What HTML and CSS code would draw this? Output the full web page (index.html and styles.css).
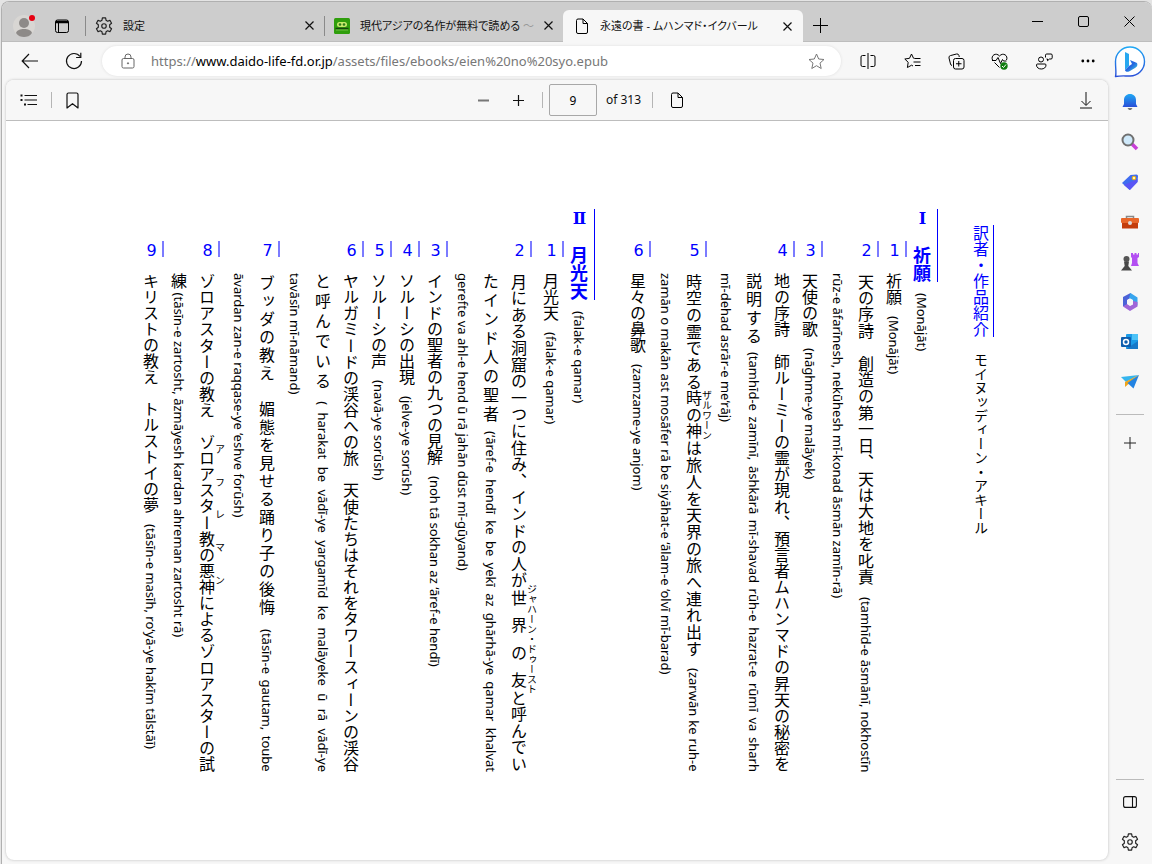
FILE: index.html
```html
<!DOCTYPE html>
<html lang="ja">
<head>
<meta charset="utf-8">
<title>永遠の書 - ムハンマド・イクバール</title>
<link rel="stylesheet" href="styles.css">
</head>
<body>
<div class="window">
  <header class="tabbar">
    <div class="tabbar-start">
      <button class="icon-btn profile" aria-label="プロファイル">
        <svg width="24" height="24" viewBox="0 0 24 24"><circle cx="12" cy="12" r="11" fill="#d8d6d3"/><circle cx="12" cy="9" r="5" fill="#8d8a88"/><path d="M4 19c1-3 4-4 8-4s7 1 8 4c-2 3-5 4-8 4s-6-1-8-4z" fill="#8d8a88"/></svg>
        <span class="dot"></span>
      </button>
      <button class="icon-btn" aria-label="タブ操作">
        <svg width="16" height="16" viewBox="0 0 16 16" fill="none" stroke="#000"><rect x="1.500" y="2" width="13" height="12.500" rx="2"/><path d="M2 3.500h12M2 4.500h12" stroke-width="1.500"/><path d="M4.500 5v9.500"/></svg>
      </button>
    </div>
    <div class="tab">
      <svg class="ico" width="18" height="18" viewBox="0 0 20 20"><use href="#gear"/></svg>
      <span class="tab-title">設定</span>
      <button class="close" aria-label="閉じる"><svg width="9" height="9" viewBox="0 0 9 9"><use href="#x"/></svg></button>
    </div>
    <div class="tab">
      <svg class="ico" width="16" height="16" viewBox="0 0 16 16"><rect width="16" height="16" rx="1.500" fill="#2f9e0c"/><rect x="3" y="4" width="10" height="5" rx="2.500" fill="#c5ea6a"/><circle cx="6" cy="6.500" r="1.300" fill="#2f7a1c"/><circle cx="10" cy="6.500" r="1.300" fill="#2f7a1c"/><path d="M1.500 10.500h13" stroke="#17450c" stroke-width="1.500"/><path d="M2 12h12" stroke="#8cd060" stroke-width=".7"/></svg>
      <span class="tab-title">現代アジアの名作が無料で読める <span class="fade">～</span></span>
      <button class="close" aria-label="閉じる"><svg width="9" height="9" viewBox="0 0 9 9"><use href="#x"/></svg></button>
    </div>
    <div class="tab active">
      <svg class="ico" width="16" height="16" viewBox="0 0 16 16"><use href="#doc"/></svg>
      <span class="tab-title">永遠の書 - ムハンマド・イクバール</span>
      <button class="close" aria-label="閉じる"><svg width="9" height="9" viewBox="0 0 9 9"><use href="#x"/></svg></button>
    </div>
    <button class="icon-btn new-tab" aria-label="新しいタブ"><svg width="15" height="15" viewBox="0 0 15 15"><path d="M7.500 0v15M0 7.500h15" stroke="#000"/></svg></button>
    <div class="win-controls">
      <button aria-label="最小化"><svg width="11" height="11" viewBox="0 0 11 11"><path d="M0 5.500h11" stroke="#000"/></svg></button>
      <button aria-label="最大化"><svg width="11" height="11" viewBox="0 0 11 11"><rect x=".5" y=".5" width="10" height="10" rx="1.500" fill="none" stroke="#000"/></svg></button>
      <button aria-label="ウィンドウを閉じる"><svg width="11" height="11" viewBox="0 0 11 11"><path d="M.5.5l10 10M10.500.5l-10 10" stroke="#000"/></svg></button>
    </div>
  </header>

  <div class="body">
    <div class="main">
      <nav class="toolbar">
        <button class="icon-btn back" aria-label="戻る"><svg width="18" height="16" viewBox="0 0 18 16" fill="none" stroke="#111" stroke-width="1.200"><path d="M17 8H1.500M8 1L1.200 8 8 15"/></svg></button>
        <button class="icon-btn reload" aria-label="更新"><svg width="18" height="18" viewBox="0 0 18 18" fill="none" stroke="#111" stroke-width="1.200"><path d="M16.500 9A7.500 7.500 0 1 1 15 4.500M15.800.8v4.700h-4.700"/></svg></button>
        <div class="address">
          <svg class="lock" width="14" height="16" viewBox="0 0 14 16" fill="none" stroke="#666"><rect x="1" y="5.500" width="12" height="9.500" rx="1.500"/><path d="M4 5.500V4a3 3 0 0 1 6 0v1.500"/><circle cx="7" cy="10.300" r=".6" fill="#666"/></svg>
          <a class="url" href="#">https://<b>www.daido-life-fd.or.jp</b>/assets/files/ebooks/eien%20no%20syo.epub</a>
          <button class="icon-btn star" aria-label="お気に入りに追加"><svg width="17" height="17" viewBox="0 0 17 17" fill="none" stroke="#777"><path d="M8.500 1l2.200 5 5.300.5-4 3.600 1.200 5.400-4.700-2.800-4.700 2.800L5 10.100 1 6.500 6.300 6z" stroke-linejoin="round"/></svg></button>
        </div>
        <div class="tools">
          <button aria-label="画面を分割"><svg width="16" height="16" viewBox="0 0 16 16" fill="none" stroke="#000"><path d="M5.500 2.500H2.500a1.500 1.500 0 0 0-1.500 1.500v8a1.500 1.500 0 0 0 1.500 1.500h3M10.500 2.500h3A1.500 1.500 0 0 1 15 4v8a1.500 1.500 0 0 1-1.500 1.500h-3M8 0v16"/></svg></button>
          <button aria-label="お気に入り"><svg width="17" height="16" viewBox="0 0 17 16" fill="none" stroke="#000" stroke-linejoin="round"><path d="M10.500 5.300L9.500 5.200 7.500 1 5.500 5.300.8 6l3.400 3.300L3.400 14.500l4.200-2.300 1.400.8M10.500 5.500h6M9.500 9h7M11 12.500h5.500"/></svg></button>
          <button aria-label="コレクション"><svg width="17" height="17" viewBox="0 0 17 17" fill="none" stroke="#000"><path d="M4 12.500A2 2 0 0 1 2.500 11L1 5a2 2 0 0 1 1.400-2.400L8.500 1a2 2 0 0 1 2.400 1.400l.4 1.600"/><rect x="5.500" y="5.500" width="10.500" height="10.500" rx="2"/><path d="M10.750 8v5.500M8 10.750h5.500"/></svg></button>
          <button aria-label="ブラウザーのエッセンシャル"><svg width="18" height="17" viewBox="0 0 18 17" fill="none" stroke="#000"><path d="M1.500 7C-.5 2.500 5 -1 8.500 3 12-1 17.500 2.500 15.500 7M1 7.500h4l2-3 2.500 6 2-4 1 1.500h3M3.500 9.500l5 5"/><circle cx="13" cy="13" r="3.700" fill="#107c10" stroke="none"/><path d="M11 13l1.500 1.500 2.500-3" stroke="#fff"/></svg></button>
          <button aria-label="フィードバック"><svg width="17" height="17" viewBox="0 0 17 17" fill="none" stroke="#000"><circle cx="5" cy="6.500" r="2.500"/><path d="M1.500 11h7.500a1 1 0 0 1 1 1c0 2.500-2 4-4.700 4S.5 14.500.5 12a1 1 0 0 1 1-1zM9.500 4.500V2.200A1.200 1.200 0 0 1 10.700 1H15a1.200 1.200 0 0 1 1.200 1.200v2.600A1.200 1.200 0 0 1 15 6h-1.500l-2 1.700V6h-1"/></svg></button>
          <button aria-label="設定など"><svg width="14" height="4" viewBox="0 0 14 4"><circle cx="1.800" cy="2" r="1.400"/><circle cx="7" cy="2" r="1.400"/><circle cx="12.200" cy="2" r="1.400"/></svg></button>
        </div>
      </nav>

      <section class="reader">
        <div class="reader-bar">
          <div class="group">
            <button class="icon-btn" aria-label="目次"><svg width="17" height="12" viewBox="0 0 17 12" stroke="#111" stroke-width="1.200"><path d="M4.500 1.500H17M4.500 6H17M7.500 10.500H17"/><path d="M.5 1.500h2M.5 6h2M4 10.500h2" stroke-width="2"/></svg></button>
            <span class="sep"></span>
            <button class="icon-btn" aria-label="ブックマーク"><svg width="13" height="17" viewBox="0 0 13 17" fill="none" stroke="#111" stroke-width="1.200"><path d="M1 2.500A1.500 1.500 0 0 1 2.500 1h8A1.500 1.500 0 0 1 12 2.500V16l-5.500-4.300L1 16z" stroke-linejoin="round"/></svg></button>
          </div>
          <div class="group pager">
            <button class="icon-btn" aria-label="前へ"><svg width="11" height="11" viewBox="0 0 11 11"><path d="M0 5.500h11" stroke="#777" stroke-width="2"/></svg></button>
            <button class="icon-btn" aria-label="次へ"><svg width="11" height="11" viewBox="0 0 11 11"><path d="M5.500 0v11M0 5.500h11" stroke="#111" stroke-width="1.200"/></svg></button>
            <span class="sep"></span>
            <input id="page" class="page-input" type="text" value="9">
            <label class="total" for="page">of 313</label>
            <span class="sep"></span>
            <button class="icon-btn" aria-label="ページ表示"><svg width="16" height="16" viewBox="0 0 16 16"><use href="#doc"/></svg></button>
          </div>
          <div class="group end">
            <button class="icon-btn" aria-label="ダウンロード"><svg width="12" height="17" viewBox="0 0 12 17" fill="none" stroke="#111"><path d="M6 0v13M1.500 9L6 13.500 10.500 9M0 16h12"/></svg></button>
          </div>
        </div>

        <article class="book">
          <p class="line intro"><a href="#">訳者・作品紹介</a><span class="author">モイヌッディーン・アキール</span></p>

          <h2 class="line"><a href="#"><span class="roman">Ⅰ</span>　祈願</a> <i>(Monājāt)</i></h2>
          <ol>
            <li><p class="line"><a class="num" href="#">1</a>祈願 <i>(Monājāt)</i></p></li>
            <li><p class="line full"><a class="num" href="#">2</a>天の序詩　創造の第一日、天は大地を叱責 <i>(tamhīd-e āsmānī, nokhostīn</i></p>
              <p class="line cont"><i>rūz-e āfarīnesh, nekūhesh mī-konad āsmān zamīn-rā)</i></p></li>
            <li><p class="line"><a class="num" href="#">3</a>天使の歌 <i>(nāghme-ye malāyek)</i></p></li>
            <li><p class="line full"><a class="num" href="#">4</a>地の序詩　師ルーミーの霊が現れ、預言者ムハンマドの昇天の秘密を</p>
              <p class="line cont full">説明する <i>(tamhīd-e zamīnī, āshkārā mī-shavad rūh-e hazrat-e rūmī va sharh</i></p>
              <p class="line cont"><i>mī-dehad asrār-e me‘rāj)</i></p></li>
            <li><p class="line full"><a class="num" href="#">5</a>時空の霊である<ruby>時の神<rt>ザルワーン</rt></ruby>は旅人を天界の旅へ連れ出す <i>(zarwān ke ruh-e</i></p>
              <p class="line cont"><i>zamān o makān ast mosāfer rā be siyāhat-e ‘ālam-e ‘olvī mī-barad)</i></p></li>
            <li><p class="line"><a class="num" href="#">6</a>星々の鼻歌 <i>(zamzame-ye anjom)</i></p></li>
          </ol>

          <h2 class="line"><a href="#"><span class="roman">Ⅱ</span>　月光天</a> <i>(falak-e qamar)</i></h2>
          <ol>
            <li><p class="line"><a class="num" href="#">1</a>月光天 <i>(falak-e qamar)</i></p></li>
            <li><p class="line full"><a class="num" href="#">2</a>月にある洞窟の一つに住み、インドの人が<ruby>世界の友<rt>ジャハーン・ドゥースト</rt></ruby>と呼んでい</p>
              <p class="line cont full">たインド人の聖者 <i>(‘āref-e hendī ke be yekī az ghārhā-ye qamar khalvat</i></p>
              <p class="line cont"><i>gerefte va ahl-e hend ū rā jahān dūst mī-gūyand)</i></p></li>
            <li><p class="line"><a class="num" href="#">3</a>インドの聖者の九つの見解 <i>(noh tā sokhan az ‘āref-e hendī)</i></p></li>
            <li><p class="line"><a class="num" href="#">4</a>ソルーシの出現 <i>(jelve-ye sorūsh)</i></p></li>
            <li><p class="line"><a class="num" href="#">5</a>ソルーシの声 <i>(navā-ye sorūsh)</i></p></li>
            <li><p class="line full"><a class="num" href="#">6</a>ヤルガミードの渓谷への旅　天使たちはそれをタワースィーンの渓谷</p>
              <p class="line cont full">と呼んでいる <i>( harakat be vādī-ye yargamīd ke malāyeke ū rā vādī-ye</i></p>
              <p class="line cont"><i>tavāsīn mī-nāmand)</i></p></li>
            <li><p class="line full"><a class="num" href="#">7</a>ブッダの教え　媚態を見せる踊り子の後悔 <i>(tāsīn-e gautam, toube</i></p>
              <p class="line cont"><i>āvardan zan-e raqqase-ye ‘eshve forūsh)</i></p></li>
            <li><p class="line full"><a class="num" href="#">8</a>ゾロアスターの教え　<ruby>ゾロアスター教の悪神<rt>アフレマン</rt></ruby>によるゾロアスターの試</p>
              <p class="line cont">練 <i>(tāsīn-e zartosht, āzmāyesh kardan ahreman zartosht rā)</i></p></li>
            <li><p class="line"><a class="num" href="#">9</a>キリストの教え　トルストイの夢 <i>(tāsīn-e masīh, ro‘yā-ye hakīm tālstāī)</i></p></li>
          </ol>
        </article>
      </section>
    </div>

    <aside class="sidebar">
      <button class="bing" aria-label="Bing"><svg width="32" height="34" viewBox="0 0 32 34"><defs><linearGradient id="bg" x1="0" y1="0" x2="0" y2="1"><stop offset="0" stop-color="#1fa8f4"/><stop offset="1" stop-color="#2a4fd8"/></linearGradient><linearGradient id="bb" x1="0" y1="0" x2="1" y2="1"><stop offset="0" stop-color="#2a7cf0"/><stop offset=".5" stop-color="#2566e0"/><stop offset="1" stop-color="#3ad8e0"/></linearGradient></defs><path d="M1.500 31.500C2.500 28 1.500 24 1.500 16.500A14.500 14.500 0 1 1 16 31C10 31 7 30.500 1.500 31.500z" fill="#fff" stroke="url(#bg)" stroke-width="1.400" stroke-linejoin="round"/><path d="M11 7l4 2v12l-4 4z" fill="#28a8f0"/><path d="M11 25l4-4 3-2-2-4 7 3c1 2 0 4-2 5l-6 3.500c-2 .7-4 0-4-1.500z" fill="url(#bb)"/></svg></button>
      <button aria-label="通知"><svg width="16" height="18" viewBox="0 0 16 18"><path d="M8 1c3.500 0 6 2.500 6 6v4l1.500 3h-15L2 11V7c0-3.500 2.500-6 6-6z" fill="url(#bg)"/><path d="M5.500 15h5l-1.500 2H7z" fill="#777"/></svg></button>
      <button aria-label="検索"><svg width="18" height="18" viewBox="0 0 18 18"><path d="M11 11l5 5" stroke="#c83fd8" stroke-width="3.500"/><circle cx="7" cy="7" r="5.500" fill="#cfe9fa" stroke="#707070" stroke-width="2"/></svg></button>
      <button aria-label="ショッピング"><svg width="18" height="18" viewBox="0 0 18 18"><path d="M1 10l8.500-8 6-.5a1.500 1.500 0 0 1 1.500 1.500l-.5 6L8.500 17z" fill="#3f6df0"/><path d="M3 12l6 5 7.500-8v-3z" fill="#5a55f5"/><circle cx="13" cy="5" r="1.800" fill="#fff3c0" stroke="#f5b400"/></svg></button>
      <button aria-label="ツール"><svg width="18" height="16" viewBox="0 0 18 16"><path d="M5.500 5V2.500h7V5" fill="none" stroke="#888" stroke-width="1.500"/><rect y="4" width="18" height="5" rx="1" fill="#e8662a"/><path d="M1 9h16v5.500H1z" fill="#c33d0c"/><circle cx="9" cy="9" r="2" fill="#ddd"/></svg></button>
      <button aria-label="ゲーム"><svg width="18" height="18" viewBox="0 0 18 18"><path d="M10 0h2v1.500h1.500V0h2v1.500H17V0h1v4l-1.500 1v5l1.500 3h-8l1-3V5L10 4z" fill="#b34ff2"/><circle cx="5.500" cy="6" r="3" fill="#555"/><path d="M3 8.500h5l-.7 4.500L11 17.500H0L3.700 13z" fill="#484848"/></svg></button>
      <button aria-label="Microsoft 365"><svg width="18" height="18" viewBox="0 0 18 18"><path d="M9.500 0L2 4v9.500L6 12V7l6-3.500z" fill="#4c63d8"/><path d="M9.500 0L16.500 4.500v8L12 10V7L8 5z" fill="#37a5ee"/><path d="M16.500 9v4.500L9 18l-7-4.500L6 11l3 2 3-1.500V8z" fill="#a066d8"/><path d="M9 5.500l3 1.800v3.500L9 12.500 6 10.800V7.300z" fill="#f7f7f7"/></svg></button>
      <button aria-label="Outlook"><svg width="18" height="18" viewBox="0 0 18 18"><rect x="5" y="1" width="12" height="15" rx="1" fill="#1a9be8"/><path d="M11 1h6v6h-6z" fill="#4ec3f7"/><path d="M5 16L17 8v8z" fill="#1678c8"/><rect x="0" y="4" width="10" height="10" rx="1" fill="#0f5fae"/><circle cx="5" cy="9" r="2.500" fill="none" stroke="#fff" stroke-width="1.500"/></svg></button>
      <button aria-label="ドロップ"><svg width="18" height="16" viewBox="0 0 18 16"><path d="M0 3l18-2L5 8z" fill="#35b5ee"/><path d="M18 1L4 8v5z" fill="#f0a51c"/><path d="M18 1L6.500 9l6 5.500z" fill="#2383e2"/></svg></button>
      <hr>
      <button aria-label="追加"><svg width="12" height="12" viewBox="0 0 12 12"><path d="M6 0v12M0 6h12" stroke="#222"/></svg></button>
      <div class="spacer"></div>
      <hr>
      <button aria-label="サイドバーを隠す"><svg width="14" height="12" viewBox="0 0 14 12" fill="none" stroke="#111" stroke-width="1.100"><rect x=".6" y=".6" width="12.800" height="10.800" rx="2"/><path d="M9.500.5v11"/></svg></button>
      <button aria-label="設定"><svg width="18" height="18" viewBox="0 0 20 20"><use href="#gear"/></svg></button>
    </aside>
  </div>
</div>

<svg class="defs" aria-hidden="true">
  <symbol id="x" viewBox="0 0 9 9"><path d="M.5.5l8 8M8.500.5l-8 8" stroke="#111" stroke-width="1.200"/></symbol>
  <symbol id="doc" viewBox="0 0 16 16"><path d="M2.500 2.500A1.500 1.500 0 0 1 4 1h5l4.500 4.500V14a1.500 1.500 0 0 1-1.500 1.500H4A1.500 1.500 0 0 1 2.500 14zM9 1v4.500h4.500" fill="none" stroke="#000"/></symbol>
  <symbol id="gear" viewBox="0 0 20 20"><g fill="none" stroke="#222" stroke-width="1.300" stroke-linejoin="round"><circle cx="10" cy="10" r="2.500"/><path d="M8.200 1h3.600l.5 2.700 1.700 1 2.600-1 1.800 3.200-2.100 1.700v2.800l2.100 1.700-1.800 3.200-2.600-1-1.700 1-.5 2.700H8.200l-.5-2.700-1.700-1-2.600 1-1.800-3.200 2.100-1.700V8.600L1.600 6.900l1.800-3.200 2.600 1 1.700-1z"/></g></symbol>
</svg>
</body>
</html>
```
FILE: styles.css
```css
* { box-sizing: border-box; }
body {
  margin: 0;
  height: 100vh;
  padding: 1px 0 0 1px;
  background: #e4e4e4;
  font: 12px/16px "Noto Sans", "Noto Sans CJK JP", sans-serif;
  color: #111;
}
button {
  margin: 0; padding: 0; border: 0; background: none; color: inherit; font: inherit;
  display: flex; align-items: center; justify-content: center;
}
svg { display: block; flex: none; }
.defs { position: absolute; width: 0; height: 0; }
.window {
  height: 100%;
  display: flex; flex-direction: column;
  border: 1px solid #b0b0b0; border-right: 0; border-bottom: 0;
  border-radius: 8px 8px 0 0;
  background: #f7f7f7;
  overflow: hidden;
}

.tabbar { display: flex; height: 40px; background: #cdcdcd; border-bottom: 1px solid #bdbdbd; flex: none; }
.tabbar-start { display: flex; align-items: center; gap: 14px; padding: 8px 11px 0 10px; }
.profile { position: relative; }
.tabbar-start .icon-btn { width: 24px; height: 24px; }
.dot { position: absolute; top: 1px; right: 1px; width: 6px; height: 6px; border-radius: 50%; background: #e60012; }
.tab {
  display: flex; align-items: center; gap: 10px;
  width: 239px; margin-top: 8px; padding: 0 10px 0 10px;
  position: relative;
}
.tab::before { content: ""; position: absolute; left: 0; top: 6px; bottom: 5px; width: 1px; background: #8a8a8a; }
.tab.active { background: #f7f7f7; border-radius: 6px 6px 0 0; width: 240px; margin-bottom: -1px; padding-left: 11px; padding-right: 11px; }
.tab.active::before { display: none; }
.tab-title { flex: 1; min-width: 0; white-space: nowrap; font-size: 11px; font-feature-settings: "palt"; }
.fade { color: #999; }
.new-tab { width: 34px; margin-top: 8px; }
.win-controls { display: flex; margin-left: auto; }
.win-controls button { width: 46px; }

.body { display: flex; flex: 1; min-height: 0; }
.main { flex: 1; min-width: 0; display: flex; flex-direction: column; }
.toolbar { display: flex; align-items: center; height: 38px; padding-left: 18px; flex: none; }
.back { width: 20px; }
.reload { width: 20px; margin-left: 24px; }
.address {
  display: flex; align-items: center; flex: 1; height: 30px;
  margin-left: 18px; padding: 0 16px 0 19px;
  border-radius: 15px; background: #fff; box-shadow: 0 0 3px #ddd;
}
.url { margin-left: 16px; flex: 1; color: #777; text-decoration: none; font-size: 13px; line-height: 20px; white-space: nowrap; }
.url b { color: #000; font-weight: 400; }
.tools { display: flex; margin: 0 -2px 0 5px; }
.tools button { width: 44px; height: 30px; }

.reader {
  flex: 1; min-height: 0; display: flex; flex-direction: column;
  margin: 0 0 4px 4px;
  border-radius: 8px; background: #fff; overflow: hidden;
  box-shadow: 0 0 3px #bbb;
}
.reader-bar {
  display: grid; grid-template-columns: 1fr auto 1fr; align-items: center;
  height: 41px; padding: 0 16px 0 14px; background: #f7f7f7; border-bottom: 1px solid #bdbdbd; flex: none;
}
.group { display: flex; align-items: center; gap: 14px; }
.group.end { justify-content: flex-end; }
.sep { width: 1px; height: 16px; background: #b5b5b5; }
.pager { gap: 0; margin-left: 48px; }
.pager .icon-btn { width: 35px; height: 32px; }
.pager .sep { margin: 0 6px; }
.page-input {
  width: 48px; height: 32px; text-align: center; border: 1px solid #a8a8a8; border-radius: 2px;
  background: #f7f7f7; font: 12px/16px "Noto Sans", sans-serif; color: #000; padding: 0;
}
.total { margin: 0 5px 0 9px; }

.book {
  flex: 1; min-height: 0;
  writing-mode: vertical-rl;
  padding: 88px 113px 88px 0;
  font: 16px/28px "Noto Sans CJK JP", sans-serif;
  color: #000;
  overflow: hidden;
}
.book ol { list-style: none; margin: 0; padding: 0; }
.line { margin: 0; white-space: nowrap; padding-inline-start: 32px; }
.line.cont { padding-inline-start: 64px; }
.line.full { text-align: justify; text-align-last: justify; }
.book a { color: #00f; text-decoration: none; }
.book i { font: 13px/20px "Noto Sans", "DejaVu Sans", sans-serif; margin-inline-start: 7px; }
.book .cont i:first-child { margin-inline-start: 0; }
.num {
  display: inline-block; inline-size: 16px; block-size: 24px; line-height: 22px;
  margin-inline-end: 16px; border-right: 2px solid #7b7bff;
  font-family: "DejaVu Sans", sans-serif; text-orientation: upright; text-align: center;
}
.line.intro { padding-inline-start: 16px; }
.intro a, h2 a { border-right: 1px solid #00f; }
h2 a { padding-right: 2px; }
.author { margin-inline-start: 16px; font-size: 14px; line-height: 20px; }
h2.line { margin-block-start: 31px; padding: 0; font-size: 18px; font-weight: 700; }
.roman { font-family: "DejaVu Serif", serif; font-size: 16px; line-height: 20px; }
rt { font-size: 10px; line-height: 14px; }

.sidebar { width: 44px; display: flex; flex-direction: column; align-items: center; flex: none; }
.sidebar button { width: 40px; height: 40px; flex: none; }
.sidebar hr { width: 28px; height: 1px; margin: 12px 0 8px; border: 0; background: #bbb; flex: none; }
.spacer { flex: 1; }
.sidebar hr ~ hr { margin: 0 0 2px; }
.sidebar button:last-child { margin-bottom: 2px; }
```
